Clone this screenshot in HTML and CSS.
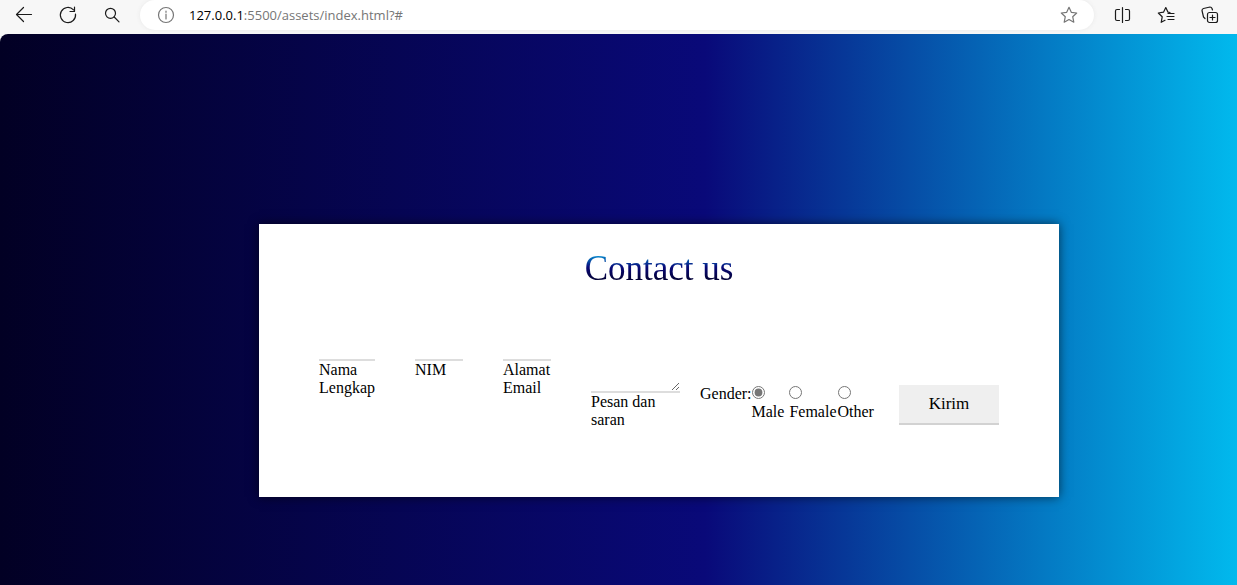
FILE: index.html
```html
<!DOCTYPE html>
<html lang="id">
<head>
<meta charset="utf-8">
<title>Contact us</title>
<link rel="stylesheet" href="styles.css">
</head>
<body>
<header class="toolbar">
  <nav class="tools">
    <button class="tool" type="button" aria-label="Back"><svg class="icon" viewBox="0 0 20 20"><path d="M17.500 9.500H2.500M9.500 2.500 2.500 9.500l7 7"/></svg></button>
    <button class="tool" type="button" aria-label="Reload"><svg class="icon" viewBox="0 0 20 20"><path d="M17.500 9A7.600 7.600 0 1 1 15.500 4.800M16.500 2v4.500H12"/></svg></button>
    <button class="tool" type="button" aria-label="Search"><svg class="icon" viewBox="0 0 20 20"><circle cx="8.500" cy="8.300" r="5"/><path d="m12.200 12 4.800 4.800"/></svg></button>
  </nav>
  <div class="address">
    <svg class="icon muted" viewBox="0 0 20 20"><circle cx="10" cy="10" r="7.500"/><path d="M10 9v5M10 6v1.300"/></svg>
    <span class="url"><span class="host">127.0.0.1</span>:5500/assets/index.html?#</span>
    <button class="tool star" type="button" aria-label="Add to favorites"><svg class="icon muted" viewBox="0 0 20 20"><path d="m10 2.300 2.300 5 5.400.7-4 3.700 1.100 5.500-4.800-2.700-4.800 2.700 1.100-5.500-4-3.700 5.400-.7z"/></svg></button>
  </div>
  <nav class="tools end">
    <button class="tool" type="button" aria-label="Split screen"><svg class="icon" viewBox="0 0 20 20"><path d="M7.500 4.500H5Q3.500 4.500 3.500 6v8Q3.500 15.500 5 15.500h2.500M13.500 4.500H16q1.500 0 1.500 1.500v8q0 1.500-1.500 1.500h-2.500M10.500 2.500v15"/></svg></button>
    <button class="tool" type="button" aria-label="Favorites"><svg class="icon" viewBox="0 0 20 20"><path d="M14 7.500 12 7.200 9.800 2.500 7.500 7.200l-5.200.8 3.900 3.800-1 5.500 3.800-2M12 8.500h6M11 11.500h7M12 14.500h6"/></svg></button>
    <button class="tool" type="button" aria-label="Collections"><svg class="icon" viewBox="0 0 20 20"><rect x="7.500" y="7.500" width="10" height="10" rx="2"/><path d="M12.500 10v5M10 12.500h5M5 13.500 3.500 12 2 5.500Q2 4 3.500 3.500L10 2q1.500 0 2 1.500l.5 1.500"/></svg></button>
  </nav>
</header>
<main class="page">
  <section class="card">
    <h1 class="title">Contact us</h1>
    <form class="form">
      <div class="field name">
        <input class="entry" type="text" id="nama">
        <label for="nama">Nama Lengkap</label>
      </div>
      <div class="field">
        <input class="entry" type="text" id="nim">
        <label for="nim">NIM</label>
      </div>
      <div class="field">
        <input class="entry" type="email" id="email">
        <label for="email">Alamat Email</label>
      </div>
      <div class="field message">
        <textarea class="entry area" id="pesan"></textarea>
        <label for="pesan">Pesan dan saran</label>
      </div>
      <div class="gender" role="radiogroup" aria-labelledby="gender-label">
        <span id="gender-label">Gender:</span>
        <div class="choice"><input class="radio" type="radio" name="gender" id="male" checked><label for="male">Male</label></div>
        <div class="choice female"><input class="radio" type="radio" name="gender" id="female"><label for="female">Female</label></div>
        <div class="choice"><input class="radio" type="radio" name="gender" id="other"><label for="other">Other</label></div>
      </div>
      <button class="submit" type="submit">Kirim</button>
    </form>
  </section>
</main>
</body>
</html>
```
FILE: styles.css
```css
* { box-sizing: border-box; }

body {
  margin: 0;
  min-height: 100vh;
  display: flex;
  flex-direction: column;
  background: #f7f7f7;
  color: #000;
  font: 16px/18px "Liberation Serif", "Times New Roman", serif;
}

button { border: 0; padding: 0; font: inherit; color: inherit; }

.toolbar {
  display: flex;
  height: 34px;
  padding-left: 14px;
  padding-right: 17px;
  padding-bottom: 4px;
}
.tools { display: flex; align-items: center; gap: 24px; }
.tool { display: flex; background: none; }
.icon {
  width: 20px;
  height: 20px;
  fill: none;
  stroke: #1b1b1b;
  stroke-width: 1.2;
  stroke-linecap: round;
  stroke-linejoin: round;
}
.muted { stroke: #767676; }

.address {
  flex: 1;
  display: flex;
  align-items: center;
  margin: 0 18px;
  padding: 0 15px 0 16px;
  border-radius: 15px;
  background: #fff;
  box-shadow: 0 0 4px #e8e8e8;
  font: 13px/18px "Open Sans", "Noto Sans", sans-serif;
  color: #767676;
}
.url { margin-left: 13px; }
.host { color: #000; }
.star { margin-left: auto; }

.page {
  flex: 1;
  display: flex;
  justify-content: center;
  align-items: flex-start;
  padding: 190px 0 88px 81px;
  border-top-left-radius: 8px;
  background: linear-gradient(90deg, rgb(2, 0, 36) 0%, rgb(9, 9, 121) 57%, rgb(0, 212, 255) calc(100% + 81px));
}

.card {
  width: 100%;
  max-width: 800px;
  padding: 25px 60px 68px;
  background: #fff;
  box-shadow: 0 0 10px rgba(0, 0, 0, 0.6);
}

.title {
  margin: 0 0 52px;
  font-size: 35px;
  font-weight: 400;
  line-height: 40px;
  text-align: center;
  color: transparent;
  background: linear-gradient(0deg, rgb(2, 0, 36) 15%, rgb(9, 9, 121) 55%, rgb(0, 212, 255) 100%);
  -webkit-background-clip: text;
  background-clip: text;
}

.form { display: flex; align-items: flex-start; }

.field {
  display: flex;
  flex-direction: column;
  width: 48px;
  margin-right: 40px;
}
.name { width: 56px; }
.message { width: 89px; margin-right: 20px; }

.entry {
  width: 100%;
  height: 20px;
  padding: 0;
  border: 0;
  border-bottom: 2px solid #ddd;
  background: transparent;
  font: inherit;
  outline: none;
}
.area { height: 52px; }

.gender { display: flex; margin-top: 44px; }
.choice { display: flex; flex-direction: column; align-items: flex-start; }
.female { margin: 0 1px 0 5px; }
.radio { width: 13px; height: 13px; margin: 1px 0 4px; accent-color: #767676; }

.submit {
  width: 100px;
  height: 40px;
  margin-top: 44px;
  margin-left: auto;
  border-bottom: 2px solid #d2d2d2;
  background: #efefef;
  font-size: 17px;
}
```
